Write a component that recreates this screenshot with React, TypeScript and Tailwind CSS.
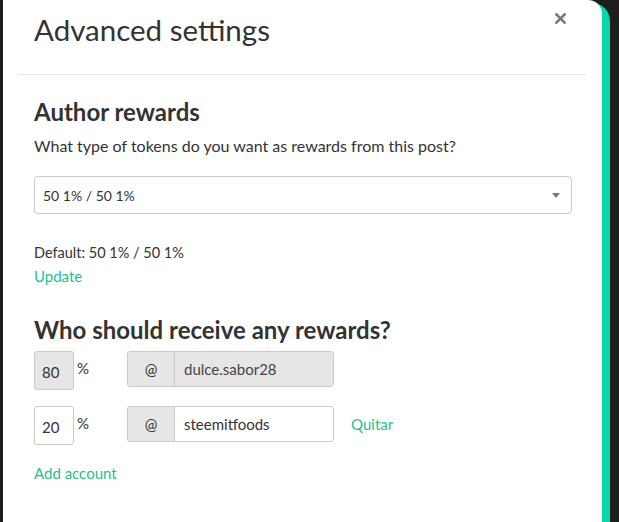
import { X } from "lucide-react";

export default function App() {
    return (
        <div
            className="w-[619px] h-[522px] bg-[#1e1e1e] flex items-stretch overflow-hidden"
            style={{ fontFamily: "Lato, 'Noto Sans', sans-serif" }}
        >
            <div className="w-[3px] shrink-0" />

            <div className="relative z-10 w-[599px] shrink-0 h-full bg-white rounded-tr-[14px] text-[#333]">
                <div className="h-[75px] mx-[16px] border-b border-[#e6e6e6] flex items-start justify-between">
                    <h1 className="pl-[15px] pt-[11px] text-[29.5px] leading-[38px] font-normal">
                        Advanced settings
                    </h1>
                    <button className="mt-[10px] mr-[17px] text-[#777c82]">
                        <X size={17} strokeWidth={3.5} />
                    </button>
                </div>

                <div className="pl-[31px] pr-[30px]">
                    <h2 className="mt-[22px] text-[24px] leading-[30px] font-bold">
                        Author rewards
                    </h2>
                    <p className="mt-[9px] text-[16px] leading-[20px]">
                        What type of tokens do you want as rewards from this post?
                    </p>

                    <div className="mt-[20px] h-[38px] border border-[#cacaca] rounded-[4px] flex items-center justify-between pl-[8px] pr-[11px] text-[14px]">
                        <span>50 1% / 50 1%</span>
                        <span className="w-0 h-0 border-l-[4px] border-r-[4px] border-t-[5px] border-l-transparent border-r-transparent border-t-[#777]" />
                    </div>

                    <p className="mt-[29px] text-[14.5px] leading-[20px]">Default: 50 1% / 50 1%</p>
                    <a className="block mt-[3px] text-[15px] leading-[20px] text-[#1fbf8f]">Update</a>

                    <h2 className="mt-[29px] text-[24px] leading-[30px] font-bold">
                        Who should receive any rewards?
                    </h2>

                    <div className="mt-[6px] flex items-start">
                        <div className="w-[40px] h-[39px] border border-[#cacaca] rounded-[3px] bg-[#e6e6e6] flex items-center pl-[7px] pt-[3px] text-[15px]">
                            80
                        </div>
                        <span className="ml-[3px] mt-[8px] text-[15px] leading-[18px]">%</span>
                        <div className="ml-[38px] w-[207px] h-[36px] border border-[#cacaca] rounded-[3px] flex text-[15px] overflow-hidden">
                            <div className="w-[47px] bg-[#e6e6e6] border-r border-[#cacaca] flex items-center justify-center">@</div>
                            <div className="flex-1 bg-[#e6e6e6] flex items-center pl-[9px] text-[#444]">dulce.sabor28</div>
                        </div>
                    </div>

                    <div className="mt-[16px] flex items-start">
                        <div className="w-[40px] h-[39px] border border-[#cacaca] rounded-[3px] bg-white flex items-center pl-[7px] pt-[3px] text-[15px]">
                            20
                        </div>
                        <span className="ml-[3px] mt-[8px] text-[15px] leading-[18px]">%</span>
                        <div className="ml-[38px] w-[207px] h-[36px] border border-[#cacaca] rounded-[3px] flex text-[15px] overflow-hidden">
                            <div className="w-[47px] bg-[#e6e6e6] border-r border-[#cacaca] flex items-center justify-center">@</div>
                            <div className="flex-1 bg-white flex items-center pl-[9px] text-[#333]">steemitfoods</div>
                        </div>
                        <a className="ml-[17px] mt-[8px] text-[15px] leading-[20px] text-[#1fbf8f]">Quitar</a>
                    </div>

                    <a className="block mt-[18px] text-[15px] leading-[20px] text-[#1fbf8f]">Add account</a>
                </div>
            </div>

            <div className="-ml-[14px] mt-[3px] w-[22px] shrink-0 bg-[#06d6a9] rounded-tr-[18px]" />
        </div>
    );
}
